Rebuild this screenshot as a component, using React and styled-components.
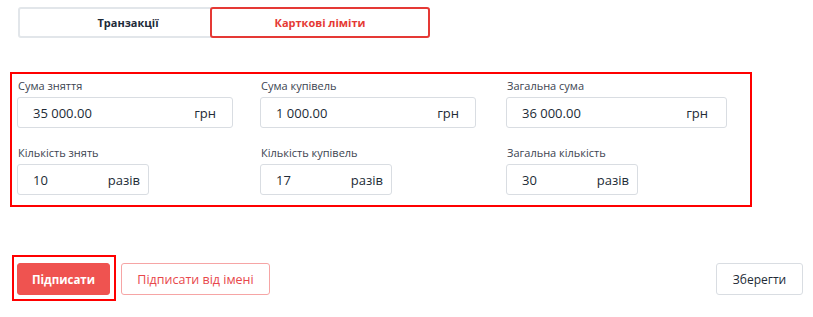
import React from "react";
import styled, { createGlobalStyle } from "styled-components";

const red = "#e53935";
const outlineRed = "#ff0000";
const text = "#222b36";
const label = "#3b4450";
const line = "#d9dde2";

const GlobalStyle = createGlobalStyle`
  body {
    margin: 0;
    background: #ffffff;
    font-family: "Open Sans", "Noto Sans", sans-serif;
  }
`;

const Page = styled.div`
  width: 813px;
  height: 317px;
  box-sizing: border-box;
  padding: 7px 10px 0 10px;
`;

const Tabs = styled.div`
  display: flex;
  margin-left: 8px;
  height: 31px;
`;

const Tab = styled.div`
  width: 220px;
  box-sizing: border-box;
  display: flex;
  align-items: center;
  justify-content: center;
  font-size: 11px;
  font-weight: 700;
  border-radius: 3px;
  border: 2px solid ${(p) => (p.active ? red : "#e2e6ea")};
  color: ${(p) => (p.active ? red : "#1d2a38")};
  background: #fff;
  position: relative;
  z-index: ${(p) => (p.active ? 1 : 0)};
  margin-right: ${(p) => (p.overlap ? "-28px" : "0")};
`;

const FieldsBox = styled.div`
  margin-top: 34px;
  width: 742px;
  box-sizing: border-box;
  border: 2px solid ${outlineRed};
  padding: 4px 5px 10px 5px;
  display: grid;
  grid-template-columns: 243px 246px 1fr;
  row-gap: 17px;
`;

const Field = styled.div`
  display: flex;
  flex-direction: column;
`;

const Label = styled.div`
  font-size: 11px;
  line-height: 15px;
  color: ${label};
  margin: 0 0 4px 1px;
`;

const Input = styled.div`
  width: ${(p) => p.w}px;
  height: 31px;
  box-sizing: border-box;
  border: 1px solid ${line};
  border-radius: 3px;
  display: flex;
  align-items: center;
  justify-content: space-between;
  padding: 0 ${(p) => p.pr}px 0 15px;
  font-size: 13px;
  color: ${text};
`;

const Unit = styled.span`
  font-size: 13px;
  color: ${text};
`;

const Actions = styled.div`
  margin-top: 48px;
  display: flex;
  align-items: flex-start;
`;

const Highlight = styled.div`
  margin-left: 2px;
  border: 2px solid ${outlineRed};
  padding: 6px 4px 4px 3px;
`;

const Button = styled.button`
  height: 32px;
  box-sizing: border-box;
  border-radius: 3px;
  font-family: inherit;
  font-size: 12px;
  padding: 0;
  white-space: nowrap;
  text-align: center;
  cursor: pointer;
`;

const PrimaryButton = styled(Button)`
  width: 93px;
  background: #ef5350;
  border: 1px solid #ef5350;
  color: #fff;
  font-weight: 700;
  font-size: 11.5px;
`;

const OutlineButton = styled(Button)`
  margin-top: 8px;
  margin-left: 5px;
  width: 149px;
  background: #fff;
  border: 1px solid #f6a5a5;
  color: #e8474b;
  font-size: 12.5px;
`;

const SaveButton = styled(Button)`
  margin-top: 8px;
  margin-left: auto;
  width: 87px;
  background: #fff;
  border: 1px solid ${line};
  color: ${text};
`;

const fields = [
  { label: "Сума зняття", value: "35 000.00", unit: "грн", w: 216, pr: 16 },
  { label: "Сума купівель", value: "1 000.00", unit: "грн", w: 216, pr: 16 },
  { label: "Загальна сума", value: "36 000.00", unit: "грн", w: 221, pr: 18 },
  { label: "Кількість знять", value: "10", unit: "разів", w: 132, pr: 8 },
  { label: "Кількість купівель", value: "17", unit: "разів", w: 132, pr: 8 },
  { label: "Загальна кількість", value: "30", unit: "разів", w: 132, pr: 8 },
];

export default function App() {
  return (
    <Page>
      <GlobalStyle />
      <Tabs>
        <Tab overlap>Транзакції</Tab>
        <Tab active>Карткові ліміти</Tab>
      </Tabs>
      <FieldsBox>
        {fields.map((f) => (
          <Field key={f.label}>
            <Label>{f.label}</Label>
            <Input w={f.w} pr={f.pr}>
              <span>{f.value}</span>
              <Unit>{f.unit}</Unit>
            </Input>
          </Field>
        ))}
      </FieldsBox>
      <Actions>
        <Highlight>
          <PrimaryButton>Підписати</PrimaryButton>
        </Highlight>
        <OutlineButton>Підписати від імені</OutlineButton>
        <SaveButton>Зберегти</SaveButton>
      </Actions>
    </Page>
  );
}
